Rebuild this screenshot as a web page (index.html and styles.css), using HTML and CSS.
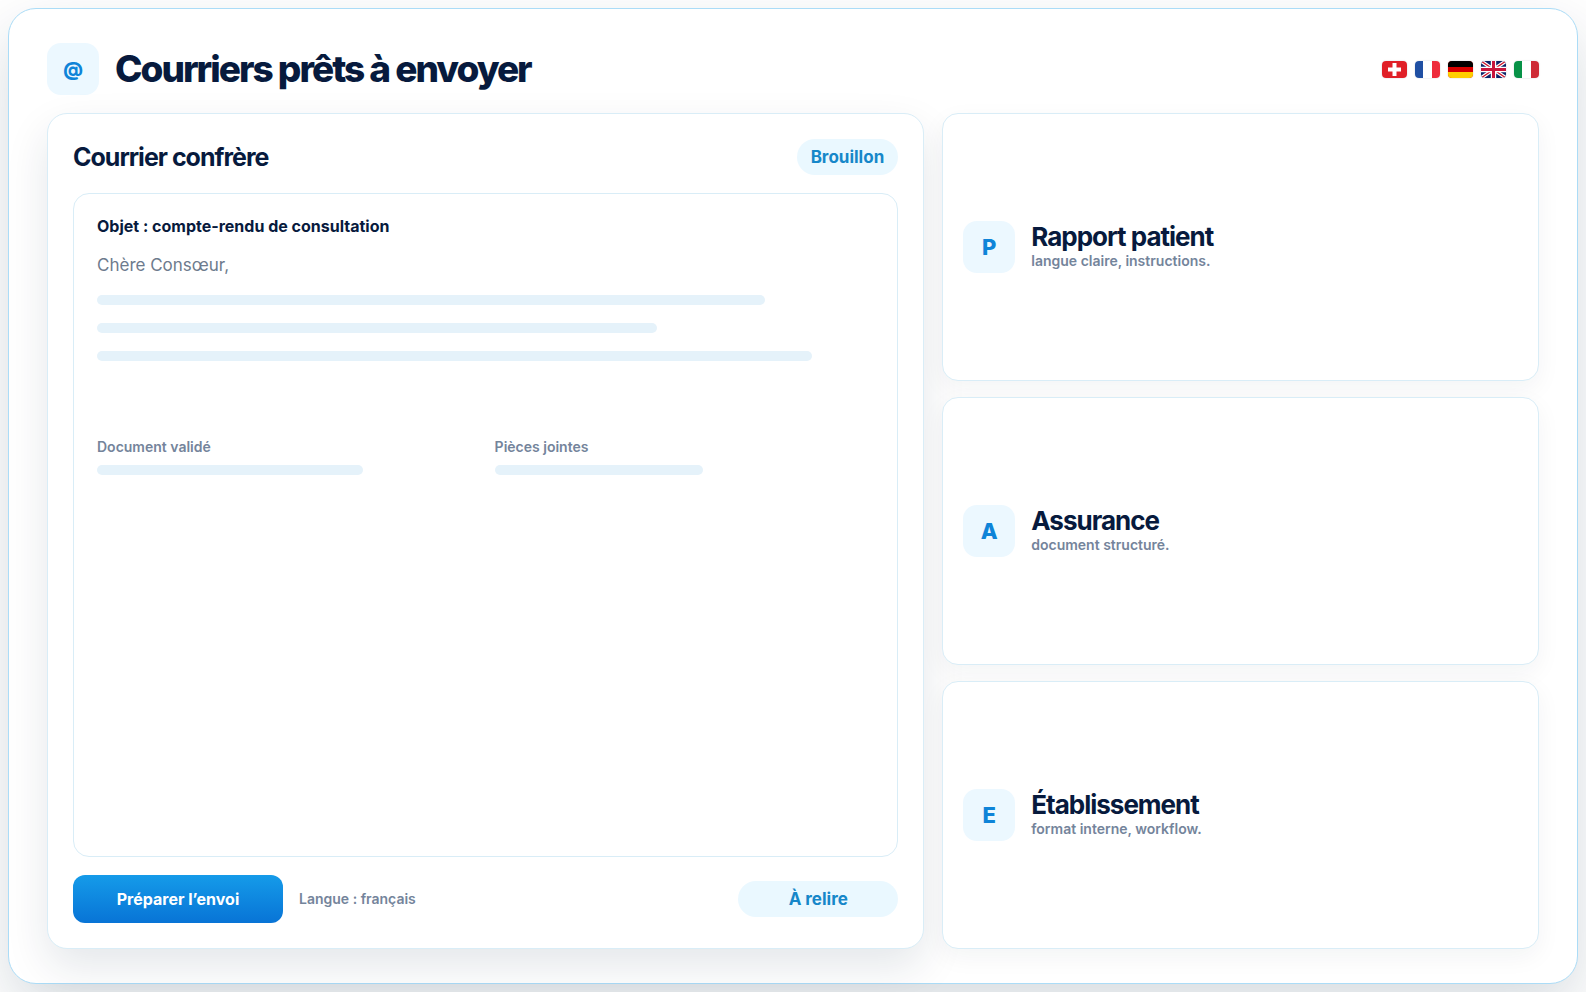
FILE: index.html
```html
<!DOCTYPE html>
<html lang="fr">

<head>
    <meta charset="UTF-8">
    <meta name="viewport" content="width=device-width, initial-scale=1.0">
    <title>Courriers prêts à envoyer</title>
    <link rel="stylesheet" href="styles.css">
</head>

<body>
    <main class="board">
        <header class="board-header">
            <span class="icon icon-at">@</span>
            <h1>Courriers prêts à envoyer</h1>
            <div class="flags">
                <svg class="flag" viewBox="0 0 25 17" role="img" aria-label="Suisse">
                    <rect width="25" height="17" fill="#e01f27" />
                    <path d="M10.5 2h4v4.5H19v4h-4.500V15h-4v-4.500H6v-4h4.500z" fill="#fff" />
                </svg>
                <svg class="flag" viewBox="0 0 25 17" role="img" aria-label="Français">
                    <rect width="25" height="17" fill="#fff" />
                    <rect width="8" height="17" fill="#1f4fa3" />
                    <rect x="17" width="8" height="17" fill="#ee2b3b" />
                </svg>
                <svg class="flag" viewBox="0 0 25 17" role="img" aria-label="Allemand">
                    <rect width="25" height="17" fill="#d80000" />
                    <rect width="25" height="6" fill="#000" />
                    <rect y="11" width="25" height="6" fill="#ffce00" />
                </svg>
                <svg class="flag" viewBox="0 0 25 17" role="img" aria-label="Anglais">
                    <rect width="25" height="17" fill="#0b2268" />
                    <path d="M0 0l25 17M25 0L0 17" stroke="#fff" stroke-width="3.6" />
                    <path d="M0 0l25 17M25 0L0 17" stroke="#cf142b" stroke-width="1.3" />
                    <path d="M12.500 0v17M0 8.500h25" stroke="#fff" stroke-width="5.4" />
                    <path d="M12.500 0v17M0 8.500h25" stroke="#c8143c" stroke-width="3" />
                </svg>
                <svg class="flag" viewBox="0 0 25 17" role="img" aria-label="Italien">
                    <rect width="25" height="17" fill="#fff" />
                    <rect width="8" height="17" fill="#079247" />
                    <rect x="17" width="8" height="17" fill="#ce2b37" />
                </svg>
            </div>
        </header>

        <div class="columns">
            <section class="letter">
                <div class="letter-header">
                    <h2>Courrier confrère</h2>
                    <span class="pill">Brouillon</span>
                </div>

                <div class="document">
                    <p class="subject">Objet : compte-rendu de consultation</p>
                    <p class="greeting">Chère Consœur,</p>
                    <div class="lines">
                        <div class="line" style="width: 86%"></div>
                        <div class="line" style="width: 72%"></div>
                        <div class="line" style="width: 92%"></div>
                    </div>
                    <div class="document-info">
                        <div>
                            <p class="small">Document validé</p>
                            <div class="line" style="width: 70%"></div>
                        </div>
                        <div>
                            <p class="small">Pièces jointes</p>
                            <div class="line" style="width: 55%"></div>
                        </div>
                    </div>
                </div>

                <div class="letter-footer">
                    <button type="button" class="btn">Préparer l’envoi</button>
                    <span class="small">Langue : français</span>
                    <span class="pill">À relire</span>
                </div>
            </section>

            <div class="types">
                <article class="type">
                    <span class="icon">P</span>
                    <div>
                        <h2>Rapport patient</h2>
                        <p class="small">langue claire, instructions.</p>
                    </div>
                </article>
                <article class="type">
                    <span class="icon">A</span>
                    <div>
                        <h2>Assurance</h2>
                        <p class="small">document structuré.</p>
                    </div>
                </article>
                <article class="type">
                    <span class="icon">E</span>
                    <div>
                        <h2>Établissement</h2>
                        <p class="small">format interne, workflow.</p>
                    </div>
                </article>
            </div>
        </div>
    </main>
</body>

</html>
```
FILE: styles.css
```css
* {
    margin: 0;
    padding: 0;
    box-sizing: border-box;
}

body {
    font-family: Inter, "Liberation Sans", sans-serif;
    background-color: #fff;
    color: #071a3d;
    display: flex;
    min-height: 100vh;
    padding: 8px;
}

.board {
    flex: 1;
    display: flex;
    flex-direction: column;
    gap: 18px;
    padding: 34px 38px;
    background-color: #fff;
    border: 1px solid #abdcf7;
    border-radius: 28px;
    box-shadow: 0 24px 60px rgba(7, 35, 61, 0.16);
}

.board-header {
    display: flex;
    align-items: center;
    gap: 16px;
}

h1 {
    font-size: 37px;
    font-weight: 800;
    line-height: 48px;
    letter-spacing: -2px;
}

h2 {
    font-size: 26px;
    font-weight: 700;
    line-height: 28px;
    letter-spacing: -1px;
}

.icon {
    flex: none;
    display: flex;
    justify-content: center;
    align-items: center;
    width: 52px;
    height: 52px;
    border-radius: 14px;
    background-color: #ecf8ff;
    color: #0f84d8;
    font-size: 22px;
    font-weight: 800;
}

.icon-at {
    font-size: 19px;
}

.flags {
    display: flex;
    gap: 8px;
    margin-left: auto;
}

.flag {
    width: 25px;
    height: 17px;
    border-radius: 4px;
    box-shadow: 0 0 1px 1px rgba(7, 26, 61, 0.06);
}

.columns {
    flex: 1;
    display: grid;
    grid-template-columns: 147fr 100fr;
    gap: 18px;
}

.letter {
    display: flex;
    flex-direction: column;
    gap: 18px;
    padding: 25px;
    background-color: #fff;
    border: 1px solid #d9edf7;
    border-radius: 20px;
    box-shadow: 0 18px 44px rgba(7, 35, 61, 0.11);
}

.letter-header {
    display: flex;
    justify-content: space-between;
    align-items: center;
}

.letter-header h2 {
    font-size: 25px;
}

.pill {
    padding: 0 14px;
    border-radius: 18px;
    background-color: #eaf8ff;
    color: #1687c9;
    font-size: 17px;
    font-weight: 700;
    line-height: 36px;
    text-align: center;
}

.document {
    flex: 1;
    padding: 23px;
    border: 1px solid #d9edf7;
    border-radius: 16px;
}

.subject {
    font-size: 16px;
    font-weight: 700;
    line-height: 18px;
}

.greeting {
    margin-top: 18px;
    color: #6d7b8d;
    font-size: 17px;
    line-height: 24px;
}

.lines {
    display: flex;
    flex-direction: column;
    gap: 18px;
    margin-top: 18px;
}

.line {
    height: 10px;
    border-radius: 5px;
    background-color: #e5f2fa;
}

.document-info {
    display: grid;
    grid-template-columns: 1fr 1fr;
    gap: 18px;
    margin-top: 76px;
}

.document-info .small {
    margin-bottom: 8px;
}

.small {
    color: #74849b;
    font-size: 14px;
    font-weight: 600;
    line-height: 20px;
}

.letter-footer {
    display: grid;
    grid-template-columns: 210px 1fr 160px;
    align-items: center;
    gap: 16px;
}

.btn {
    height: 48px;
    border: none;
    border-radius: 12px;
    background: linear-gradient(#159be9, #0874d6);
    color: #fff;
    font-family: inherit;
    font-size: 16px;
    font-weight: 700;
    cursor: pointer;
}

.btn:hover {
    background: #0874d6;
}

.types {
    display: grid;
    grid-template-rows: repeat(3, 1fr);
    gap: 16px;
}

.type {
    display: flex;
    align-items: center;
    gap: 16px;
    padding: 20px;
    background-color: #fff;
    border: 1px solid #d9edf7;
    border-radius: 16px;
    box-shadow: 0 8px 24px rgba(7, 35, 61, 0.05);
}

@media (max-width: 900px) {
    .columns {
        grid-template-columns: 1fr;
    }
}
```
